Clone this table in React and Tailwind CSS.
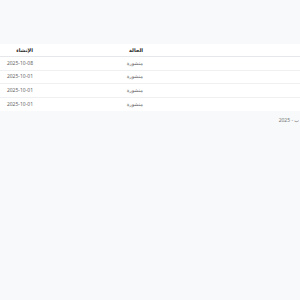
const rows = [
  { status: "منشورة", date: "2025-10-08" },
  { status: "منشورة", date: "2025-10-01" },
  { status: "منشورة", date: "2025-10-01" },
  { status: "منشورة", date: "2025-10-01" },
];

export default function App() {
  return (
    <div
      dir="rtl"
      className="min-h-[300px] w-[300px] overflow-hidden bg-[#f8f9fa] pt-[44px] text-[5px] leading-none"
      style={{ fontFamily: '"Noto Sans", "DejaVu Sans", sans-serif' }}
    >
      <div className="bg-white">
        {/* header */}
        <div className="flex h-[13px] items-center border-b border-[#e5e7eb] font-bold text-[#222]">
          <div className="w-[157px]" />
          <div className="w-[110px]">الحالة</div>
          <div className="flex-1">الإنشاء</div>
        </div>
        {rows.map((r, i) => (
          <div
            key={i}
            className="flex h-[13.5px] items-center border-b border-[#eef0f2] text-[#666] last:border-b-0"
          >
            <div className="w-[157px]" />
            <div className="w-[110px]">{r.status}</div>
            <div className="flex-1">{r.date}</div>
          </div>
        ))}
      </div>
      <div className="pr-[1px] pt-[7px] text-[#777]">ب - 2025</div>
    </div>
  );
}
